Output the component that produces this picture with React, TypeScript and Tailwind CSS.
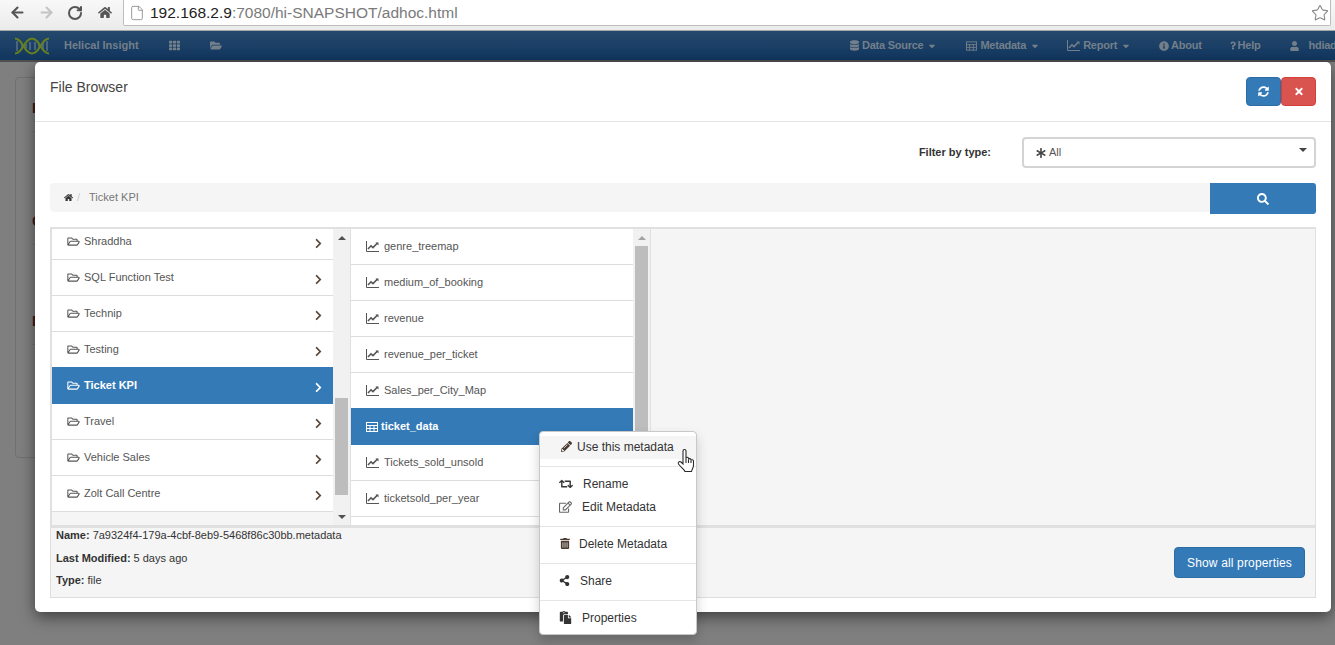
import { ArrowLeft, ArrowRight, File, RotateCw, Star } from "lucide-react";
import {
  FaAsterisk,
  FaCaretDown,
  FaChevronRight,
  FaDatabase,
  FaFolderOpen,
  FaHome,
  FaInfoCircle,
  FaPaste,
  FaPencilAlt,
  FaQuestion,
  FaRegEdit,
  FaRegFolderOpen,
  FaRetweet,
  FaSearch,
  FaShareAlt,
  FaSyncAlt,
  FaTh,
  FaTimes,
  FaTrashAlt,
  FaUser,
} from "react-icons/fa";

const folders = ["Shraddha", "SQL Function Test", "Technip", "Testing", "Ticket KPI", "Travel", "Vehicle Sales", "Zolt Call Centre"];
const files = ["genre_treemap", "medium_of_booking", "revenue", "revenue_per_ticket", "Sales_per_City_Map", "ticket_data", "Tickets_sold_unsold", "ticketsold_per_year"];

function DnaLogo() {
  return (
    <svg width="34" height="18" viewBox="0 0 34 18" fill="none">
      <path d="M2 4v10M7 6v6M11 7v4M15 5v8M20 5v8M24 7v4M28 6v6M32 4v10" stroke="#7d8a96" strokeWidth="1" />
      <path d="M0 1.5C8 1.5 9 16.5 17 16.5S26 1.5 34 1.5" stroke="#66801f" strokeWidth="2" />
      <path d="M0 16.5C8 16.5 9 1.5 17 1.5S26 16.5 34 16.5" stroke="#66801f" strokeWidth="2" />
    </svg>
  );
}

function ChartIcon({ className }: { className: string }) {
  return (
    <svg className={className} viewBox="0 0 13 11" fill="none" stroke="currentColor">
      <path d="M0.5 0V10.5H13" strokeWidth="1" />
      <path d="M2 8L5 4.8L7 6.6L11.5 2" strokeWidth="1.6" />
      <path d="M9.5 1.5H12.5V4.5Z" fill="currentColor" strokeWidth="0" />
    </svg>
  );
}

function TableIcon({ className }: { className: string }) {
  return (
    <svg className={className} viewBox="0 0 12 10" fill="none" stroke="currentColor" strokeWidth="1">
      <rect x="0.5" y="0.5" width="11" height="9" />
      <path d="M0 3.5H12M0 6.5H12M4 3V10M8 3V10" />
    </svg>
  );
}

function HandCursor() {
  return (
    <svg className="w-[19px] h-[25px]" viewBox="0 0 19 25" fill="#fff" stroke="#2a2a2a" strokeWidth="1.1">
      <path d="M6 3C6 1 9 1 9 3V10C9 9 11.5 9 11.5 10.5V11.5C11.5 10.3 14 10.3 14 12V12.5C14 11.5 16.5 11.5 16.5 13V17C16.5 20 15 21 14.5 23.5H8C7 21 4 19.5 1.5 16C0.5 14 2.5 13 4 14L6 16Z" />
      <path d="M9 10V15M11.5 11.5V15M14 12.5V15" fill="none" />
    </svg>
  );
}

function NavItem({ icon, label, caret, className }: { icon: React.ReactNode; label: string; caret?: boolean; className: string }) {
  return (
    <div className={`flex items-center shrink-0 ${className}`}>
      {icon}
      <span className="tracking-[-0.25px]">{label}</span>
      {caret && <FaCaretDown className="ml-[4px] w-[10px] h-[10px]" />}
    </div>
  );
}

function Scrollbar({ top, thumb, arrow }: { top: number; thumb: number; arrow: string }) {
  return (
    <div className="w-[17px] shrink-0 bg-[#f1f1f1] flex flex-col items-center relative">
      <div className="h-[17px] flex items-center justify-center shrink-0">
        <div className={`w-0 h-0 border-x-[4px] border-x-transparent border-b-[4px] ${arrow === "dark" ? "border-b-[#505050]" : "border-b-[#a3a3a3]"}`} />
      </div>
      <div className="shrink-0" style={{ height: top }} />
      <div className="w-[13px] bg-[#bdbdbd] shrink-0" style={{ height: thumb }} />
      <div className="flex-1" />
      <div className="h-[17px] flex items-center justify-center shrink-0">
        <div className="w-0 h-0 border-x-[4px] border-x-transparent border-t-[4px] border-t-[#505050]" />
      </div>
    </div>
  );
}

function MenuItem({ icon, label, iconClass, gap, hover }: { icon: React.ReactNode; label: string; iconClass: string; gap: string; hover?: boolean }) {
  return (
    <div className={`h-[23px] flex items-center text-[12px] text-[#333] ${hover ? "bg-[#f5f5f5] pb-[2px]" : ""} ${iconClass}`}>
      <span className={`flex items-center ${gap}`}>{icon}</span>
      <span>{label}</span>
    </div>
  );
}

export default function App() {
  return (
    <div className="relative w-[1335px] h-[645px] overflow-hidden bg-[#7f7f7f] font-['Liberation_Sans',Arial,sans-serif]">
      {/* browser toolbar */}
      <div className="h-[31px] bg-gradient-to-b from-[#f8f8f8] to-[#ebebeb] border-b border-[#a8a8a8] flex items-start">
        <div className="w-[123px] h-[25px] flex items-center pl-[9px] shrink-0">
          <ArrowLeft className="w-[17px] h-[17px] text-[#555]" strokeWidth={3} />
          <ArrowRight className="w-[17px] h-[17px] ml-[12px] text-[#c4c4c4]" strokeWidth={3} />
          <RotateCw className="w-[16px] h-[16px] ml-[12px] text-[#555]" strokeWidth={3} />
          <FaHome className="w-[14px] h-[15px] ml-[15px] text-[#555]" />
        </div>
        <div className="w-[1208px] h-[26px] bg-white border border-t-0 border-[#bdbdbd] rounded-b-[2px] flex items-center shrink-0">
          <File className="w-[16px] h-[18px] ml-[5px] text-[#8a8a8a]" strokeWidth={1.3} />
          <div className="ml-[5px] text-[15.5px] text-[#7a7a7a] leading-none">
            <span className="text-[#222]">192.168.2.9</span>:7080/hi-SNAPSHOT/adhoc.html
          </div>
          <Star className="ml-auto mr-[1px] w-[18px] h-[18px] text-[#8a8a8a]" strokeWidth={1.5} />
        </div>
      </div>

      {/* navbar, dimmed by the backdrop */}
      <div className="h-[31px] border-b-2 border-[#4f4f4f] bg-gradient-to-b from-[#25496c] to-[#11365f] flex items-center overflow-hidden text-[11px] font-bold text-[#737f8a]">
        <div className="ml-[15px] shrink-0 flex items-center"><DnaLogo /></div>
        <span className="ml-[15px] shrink-0">Helical Insight</span>
        <FaTh className="ml-[30px] w-[11px] h-[11px] shrink-0" />
        <FaFolderOpen className="ml-[30px] w-[12px] h-[11px] shrink-0" />
        <div className="flex-1" />
        <div className="w-[485px] shrink-0 flex items-center">
          <NavItem icon={<FaDatabase className="w-[9px] h-[11px] mr-[3px]" />} label="Data Source" caret className="" />
          <NavItem icon={<TableIcon className="w-[11px] h-[10px] mr-[3px]" />} label="Metadata" caret className="ml-[29px]" />
          <NavItem icon={<ChartIcon className="w-[13px] h-[11px] mr-[3px]" />} label="Report" caret className="ml-[27px]" />
          <NavItem icon={<FaInfoCircle className="w-[10px] h-[10px] mr-[2px]" />} label="About" className="ml-[28px]" />
          <NavItem icon={<FaQuestion className="w-[6px] h-[9px] mr-[2px]" />} label="Help" className="ml-[28px]" />
          <NavItem icon={<FaUser className="w-[9px] h-[10px] mr-[9px]" />} label="hdiad" className="ml-[30px]" />
        </div>
      </div>

      {/* page behind the modal */}
      <div className="ml-[15px] mt-[15px] w-[400px] h-[381px] border border-[#707070] rounded-[4px] text-[14px] leading-[16px] font-bold text-[#3a1a1a] pl-[16px]">
        <div className="mt-[22px]">F</div>
        <div className="mt-[15px] h-px w-[10px] bg-[#747474]" />
        <div className="mt-[81px]">C</div>
        <div className="mt-[15px] h-px w-[10px] bg-[#747474]" />
        <div className="mt-[68px]">D</div>
        <div className="mt-[15px] h-px w-[10px] bg-[#747474]" />
      </div>

      {/* file browser modal */}
      <div className="absolute left-[35px] top-[62px] w-[1296px] h-[550px] bg-white rounded-[5px] shadow-[0_5px_15px_rgba(0,0,0,0.5)] flex flex-col">
        <div className="h-[60px] shrink-0 border-b border-[#e5e5e5] flex items-start justify-between pl-[15px] pr-[15px]">
          <div className="mt-[17px] text-[14px] leading-[16px] text-[#444]">File Browser</div>
          <div className="mt-[15px] flex">
            <button className="w-[35px] h-[29px] bg-[#337ab7] border border-[#2e6da4] rounded-[4px] flex items-center justify-center text-white">
              <FaSyncAlt className="w-[11px] h-[11px]" />
            </button>
            <button className="w-[35px] h-[29px] bg-[#d9534f] border border-[#d43f3a] rounded-[4px] flex items-center justify-center text-white">
              <FaTimes className="w-[10px] h-[11px]" />
            </button>
          </div>
        </div>

        <div className="mt-[15px] h-[31px] shrink-0 flex items-center justify-end pr-[15px]">
          <label className="text-[11px] font-bold text-[#333] mr-[31px]">Filter by type:</label>
          <div className="w-[294px] h-[31px] bg-white border-2 border-[#d4d4d4] rounded-[4px] flex items-center pl-[12px] text-[11px] text-[#555] relative">
            <FaAsterisk className="w-[10px] h-[10px] mr-[3px] text-[#444]" />
            <span>All</span>
            <div className="absolute right-[7px] top-[9px] w-0 h-0 border-x-[4px] border-x-transparent border-t-[4px] border-t-[#444]" />
          </div>
        </div>

        <div className="mt-[15px] ml-[15px] mr-[15px] flex items-start shrink-0">
          <div className="w-[1160px] h-[29px] bg-[#f5f5f5] rounded-l-[4px] flex items-center pl-[14px] text-[11px] text-[#777]">
            <FaHome className="w-[9px] h-[9px] text-[#333]" />
            <span className="ml-[4px] text-[#ccc]">/</span>
            <span className="ml-[9px]">Ticket KPI</span>
          </div>
          <button className="w-[106px] h-[31px] bg-[#337ab7] rounded-r-[3px] flex items-center justify-center text-white">
            <FaSearch className="w-[12px] h-[12px]" />
          </button>
        </div>

        <div className="mt-[13px] mx-[15px] h-[301px] shrink-0 border-l-2 border-r border-t-2 border-[#e0e0e0] border-b-[3px] bg-[#f5f5f5] flex overflow-hidden">
          <div className="w-[281px] shrink-0 overflow-hidden">
            <div className="-mt-[5px]">
              {folders.map((f) => {
                const on = f === "Ticket KPI";
                return (
                  <div
                    key={f}
                    className={`flex items-center pl-[15px] pr-[10px] text-[11px] ${on ? "h-[37px] -mt-px bg-[#337ab7] text-white font-bold" : "h-[36px] bg-white border-b border-[#ddd] text-[#555]"}`}
                  >
                    <FaRegFolderOpen className="w-[13px] h-[11px] mr-[4px] shrink-0" />
                    <span>{f}</span>
                    <FaChevronRight className={`ml-auto w-[9px] h-[11px] mt-[3px] ${on ? "text-white" : "text-[#5b4a3c]"}`} />
                  </div>
                );
              })}
            </div>
          </div>
          <Scrollbar top={152} thumb={97} arrow="dark" />
          <div className="w-px bg-[#e0e0e0] shrink-0" />
          <div className="w-[282px] shrink-0 overflow-hidden">
            {files.map((f) => {
              const on = f === "ticket_data";
              return (
                <div
                  key={f}
                  className={`flex items-center pl-[15px] text-[11px] ${on ? "h-[37px] -mt-px bg-[#337ab7] text-white font-bold" : "h-[36px] bg-white border-b border-[#ddd] text-[#555]"}`}
                >
                  {on ? <TableIcon className="w-[12px] h-[10px] mr-[3px]" /> : <ChartIcon className="w-[13px] h-[11px] mr-[5px] shrink-0" />}
                  <span>{f}</span>
                </div>
              );
            })}
            <div className="h-[36px] bg-white" />
          </div>
          <Scrollbar top={0} thumb={255} arrow="light" />
          <div className="w-px bg-[#e0e0e0] shrink-0" />
          <div className="flex-1" />
        </div>

        <div className="mx-[15px] h-[70px] shrink-0 bg-[#f5f5f5] border-x border-b border-[#ddd] flex items-start justify-between pl-[5px] pr-[10px] text-[11px] text-[#333]">
          <div className="flex flex-col">
            <div className="h-[15px] flex items-center"><b className="mr-[3px]">Name:</b>7a9324f4-179a-4cbf-8eb9-5468f86c30bb.metadata</div>
            <div className="mt-[8px] h-[15px] flex items-center"><b className="mr-[3px]">Last Modified:</b>5 days ago</div>
            <div className="mt-[7px] h-[15px] flex items-center"><b className="mr-[3px]">Type:</b>file</div>
          </div>
          <button className="mt-[19px] w-[131px] h-[31px] bg-[#337ab7] border border-[#2e6da4] rounded-[4px] text-[12px] tracking-[0.15px] text-white">Show all properties</button>
        </div>
      </div>

      {/* context menu */}
      <div className="absolute left-[539px] top-[431px] w-[158px] h-[204px] bg-white rounded-[4px] border border-[#c8c8c8] shadow-[0_6px_12px_rgba(0,0,0,0.18)] pt-[4px]">
        <MenuItem hover icon={<FaPencilAlt className="w-[11px] h-[11px] text-[#4a3a30]" />} label="Use this metadata" iconClass="pl-[21px]" gap="mr-[5px]" />
        <div className="h-px bg-[#e5e5e5] mt-[7px] mb-[5px]" />
        <MenuItem icon={<FaRetweet className="w-[14px] h-[12px] text-[#333]" />} label="Rename" iconClass="pl-[19px]" gap="mr-[10px]" />
        <MenuItem icon={<FaRegEdit className="w-[13px] h-[12px] text-[#666]" />} label="Edit Metadata" iconClass="pl-[19px]" gap="mr-[10px]" />
        <div className="h-px bg-[#e5e5e5] mt-[8px] mb-[5px]" />
        <MenuItem icon={<FaTrashAlt className="w-[10px] h-[11px] text-[#4a3a30]" />} label="Delete Metadata" iconClass="pl-[20px]" gap="mr-[9px]" />
        <div className="h-px bg-[#e5e5e5] mt-[8px] mb-[5px]" />
        <MenuItem icon={<FaShareAlt className="w-[11px] h-[11px] text-[#333]" />} label="Share" iconClass="pl-[19px]" gap="mr-[10px]" />
        <div className="h-px bg-[#e5e5e5] mt-[8px] mb-[5px]" />
        <MenuItem icon={<FaPaste className="w-[13px] h-[13px] text-[#333]" />} label="Properties" iconClass="pl-[19px]" gap="mr-[10px]" />
      </div>

      {/* mouse pointer */}
      <div className="absolute left-[677px] top-[448px]">
        <HandCursor />
      </div>
    </div>
  );
}
